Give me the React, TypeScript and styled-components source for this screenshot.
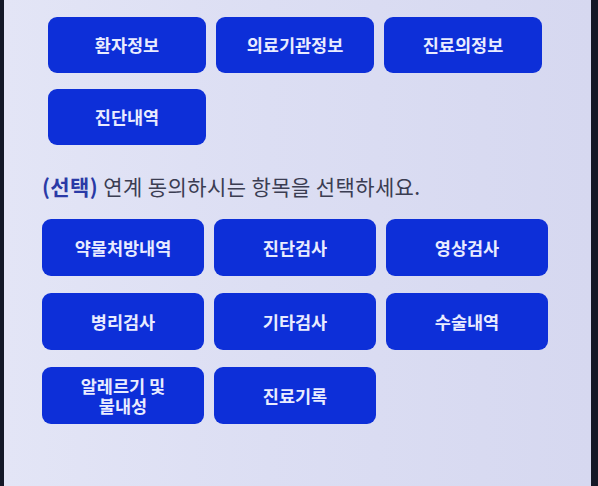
import styled, { createGlobalStyle } from "styled-components";

const GlobalStyle = createGlobalStyle`
  html, body {
    margin: 0;
    padding: 0;
    background: #141827;
  }
  body {
    font-family: "Noto Sans CJK KR", "Noto Sans", sans-serif;
  }
`;

const Screen = styled.div`
  margin-left: 4px;
  width: 587px;
  height: 486px;
  box-sizing: border-box;
  background: linear-gradient(90deg, #e3e5f6 0%, #dcdef3 45%, #d6d8f0 100%);
  overflow: hidden;
  display: flex;
  flex-direction: column;
`;

const Section = styled.div<{ $left: number; $top: number }>`
  padding-left: ${(p) => p.$left}px;
  margin-top: ${(p) => p.$top}px;
`;

const ButtonGrid = styled.div<{ $col: number; $row: number; $rowGap: number }>`
  display: grid;
  grid-template-columns: repeat(3, ${(p) => p.$col}px);
  grid-auto-rows: ${(p) => p.$row}px;
  column-gap: 10px;
  row-gap: ${(p) => p.$rowGap}px;
`;

const ItemButton = styled.button`
  border: none;
  border-radius: 9px;
  background: #0d2fd8;
  color: #e9ecff;
  font-family: inherit;
  font-size: 17.5px;
  font-weight: 600;
  line-height: 20px;
  padding: 0 10px;
  white-space: pre-line;
  text-align: center;
`;

const Notice = styled.p`
  margin: 0;
  font-size: 21px;
  line-height: 26px;
  color: #3b3d52;
  letter-spacing: 0.4px;
`;

const Optional = styled.span`
  color: #2a3aa6;
  font-weight: 600;
`;

const required = ["환자정보", "의료기관정보", "진료의정보", "진단내역"];
const optional = [
  "약물처방내역",
  "진단검사",
  "영상검사",
  "병리검사",
  "기타검사",
  "수술내역",
  "알레르기 및\n불내성",
  "진료기록",
];

export default function App() {
  return (
    <>
      <GlobalStyle />
      <Screen>
        <Section $left={44} $top={17}>
          <ButtonGrid $col={158} $row={56} $rowGap={16}>
            {required.map((label) => (
              <ItemButton key={label}>{label}</ItemButton>
            ))}
          </ButtonGrid>
        </Section>
        <Section $left={38} $top={28}>
          <Notice>
            <Optional>(선택)</Optional> 연계 동의하시는 항목을 선택하세요.
          </Notice>
        </Section>
        <Section $left={38} $top={20}>
          <ButtonGrid $col={162} $row={57} $rowGap={17}>
            {optional.map((label) => (
              <ItemButton key={label}>{label}</ItemButton>
            ))}
          </ButtonGrid>
        </Section>
      </Screen>
    </>
  );
}
